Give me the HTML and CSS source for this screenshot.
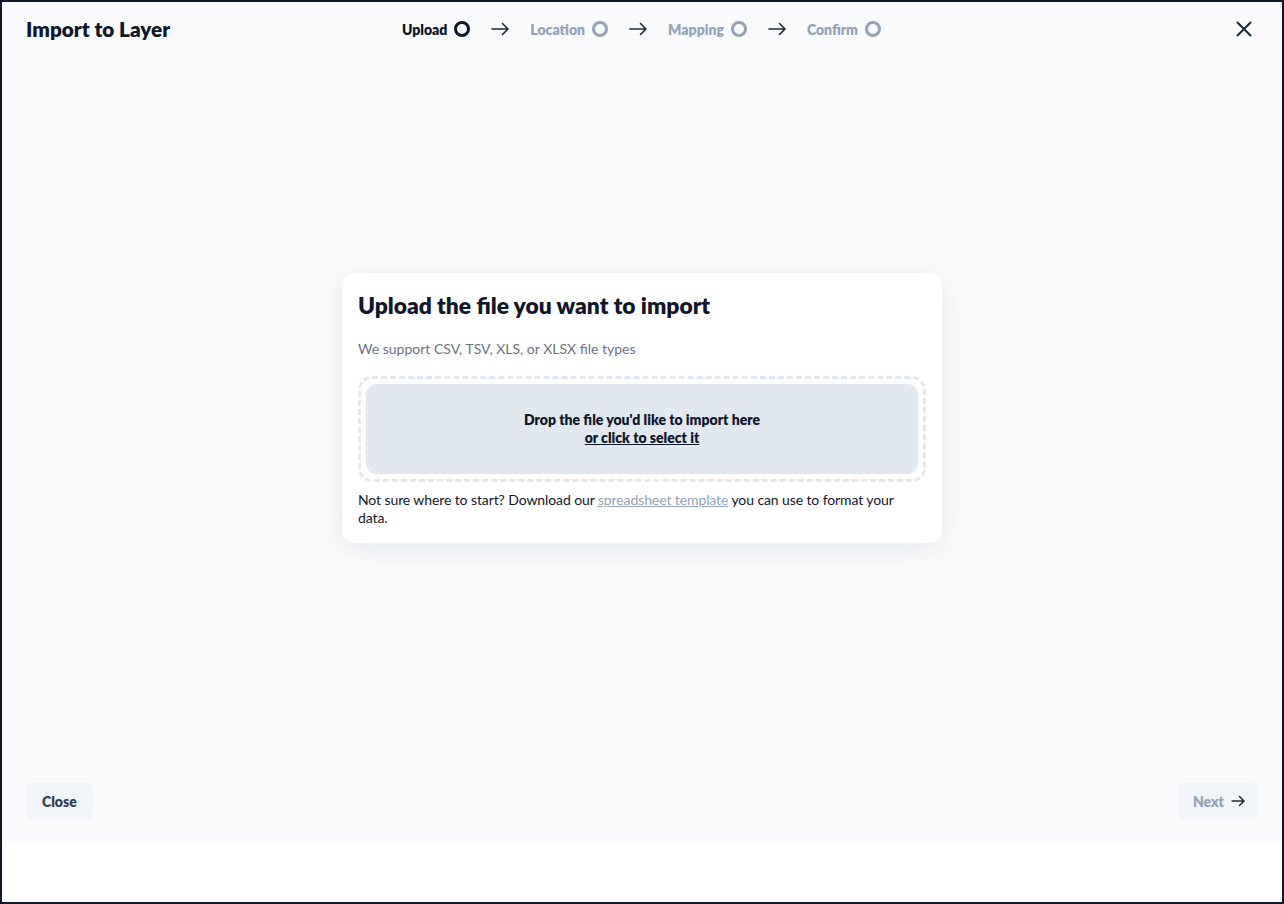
FILE: index.html
```html
<!DOCTYPE html>
<html lang="en">
<head>
    <meta charset="UTF-8">
    <meta name="viewport" content="width=device-width, initial-scale=1.0">
    <title>Import to Layer</title>
    <link rel="stylesheet" href="styles.css">
</head>
<body>
    <div class="frame">
        <div class="panel">
            <header class="topbar">
                <h1 class="title">Import to Layer</h1>

                <ol class="steps">
                    <li class="step active">Upload <span class="dot"></span></li>
                    <li class="arrow">
                        <svg width="20" height="20" viewBox="0 0 20 20" fill="none" stroke="currentColor" stroke-width="1.6" stroke-linecap="round" stroke-linejoin="round"><path d="M2 10h16M12.5 4.5L18 10l-5.5 5.5"/></svg>
                    </li>
                    <li class="step">Location <span class="dot"></span></li>
                    <li class="arrow">
                        <svg width="20" height="20" viewBox="0 0 20 20" fill="none" stroke="currentColor" stroke-width="1.6" stroke-linecap="round" stroke-linejoin="round"><path d="M2 10h16M12.5 4.5L18 10l-5.5 5.5"/></svg>
                    </li>
                    <li class="step">Mapping <span class="dot"></span></li>
                    <li class="arrow">
                        <svg width="20" height="20" viewBox="0 0 20 20" fill="none" stroke="currentColor" stroke-width="1.6" stroke-linecap="round" stroke-linejoin="round"><path d="M2 10h16M12.5 4.5L18 10l-5.5 5.5"/></svg>
                    </li>
                    <li class="step">Confirm <span class="dot"></span></li>
                </ol>

                <button class="close-x" type="button" aria-label="Close">
                    <svg width="16" height="16" viewBox="0 0 16 16" fill="none" stroke="currentColor" stroke-width="2" stroke-linecap="round"><path d="M1.5 1.5l13 13M14.5 1.5l-13 13"/></svg>
                </button>
            </header>

            <main class="content">
                <section class="card">
                    <h2>Upload the file you want to import</h2>
                    <p class="hint">We support CSV, TSV, XLS, or XLSX file types</p>

                    <div class="dropzone">
                        <div class="dropzone-inner">
                            <span>Drop the file you'd like to import here</span>
                            <a href="#" class="select-link">or click to select it</a>
                        </div>
                    </div>

                    <p class="template">Not sure where to start? Download our <a href="#">spreadsheet template</a> you can use to format your data.</p>
                </section>
            </main>

            <footer class="actions">
                <button class="btn" type="button">Close</button>
                <button class="btn next" type="button" disabled>
                    Next
                    <svg width="16" height="16" viewBox="0 0 16 16" fill="none" stroke="#1e293b" stroke-width="1.5" stroke-linecap="round" stroke-linejoin="round"><path d="M2 8h12M9.5 3.5L14 8l-4.5 4.5"/></svg>
                </button>
            </footer>
        </div>
    </div>
</body>
</html>
```

FILE: styles.css
```css
* {
    box-sizing: border-box;
}

body {
    margin: 0;
    font-family: 'Lato', 'Liberation Sans', sans-serif;
    color: #0f172a;
    background-color: #ffffff;
}

.frame {
    width: 1284px;
    height: 904px;
    border: 2px solid #111827;
    background-color: #ffffff;
}

.panel {
    height: 840px;
    background-color: #f8fafc;
    display: flex;
    flex-direction: column;
}

/* top bar: title, step indicator, close */
.topbar {
    height: 54px;
    padding: 0 30px 0 24px;
    display: flex;
    align-items: center;
    position: relative;
}

.title {
    margin: 0;
    font-size: 20.7px;
    font-weight: 800;
    color: #0f172a;
}

.steps {
    position: absolute;
    left: 400px;
    top: 0;
    height: 54px;
    margin: 0;
    padding: 0;
    list-style: none;
    display: flex;
    align-items: center;
    gap: 20px;
}

.step {
    display: flex;
    align-items: center;
    gap: 7px;
    font-size: 14px;
    font-weight: 800;
    color: #94a3b8;
}

.step .dot {
    width: 16px;
    height: 16px;
    border-radius: 50%;
    border: 3px solid #94a3b8;
}

.step.active {
    color: #0f172a;
}

.step.active .dot {
    border-color: #0f172a;
}

.arrow {
    display: flex;
    color: #1e293b;
}

.close-x {
    margin-left: auto;
    background: none;
    border: none;
    padding: 0;
    display: flex;
    color: #1e293b;
    cursor: pointer;
}

/* centered upload card */
.content {
    flex: 1;
    display: flex;
    align-items: center;
    justify-content: center;
    padding-top: 6px;
}

.card {
    width: 600px;
    background-color: #ffffff;
    border-radius: 12px;
    padding: 18px 16px 16px;
    box-shadow: 0 6px 28px rgba(15, 23, 42, 0.08);
}

.card h2 {
    margin: 0;
    font-size: 22.8px;
    line-height: 28px;
    font-weight: 800;
    color: #0f172a;
}

.hint {
    margin: 20px 0 17px;
    font-size: 14px;
    line-height: 20px;
    color: #6b7280;
}

.dropzone {
    border: 3px dashed #e2e8f0;
    border-radius: 14px;
    padding: 5px;
}

.dropzone-inner {
    height: 90px;
    background-color: #e2e8f0;
    border-radius: 10px;
    display: flex;
    flex-direction: column;
    align-items: center;
    justify-content: center;
    font-size: 14px;
    line-height: 18px;
    font-weight: 800;
    color: #0f172a;
    cursor: pointer;
}

.select-link {
    color: #0f172a;
    text-decoration: underline;
}

.template {
    margin: 9px 0 0;
    font-size: 14px;
    line-height: 18px;
    letter-spacing: -0.1px;
    color: #0f172a;
}

.template a {
    color: #94a3b8;
    text-decoration: underline;
}

/* bottom buttons */
.actions {
    height: 88px;
    padding: 6px 24px 0 24px;
    display: flex;
    justify-content: space-between;
    align-items: center;
}

.btn {
    height: 36px;
    padding: 0 16px;
    border: none;
    border-radius: 6px;
    background-color: #f1f5f9;
    font-family: inherit;
    font-size: 14px;
    font-weight: 800;
    color: #334155;
    display: flex;
    align-items: center;
    gap: 6px;
    cursor: pointer;
}

.btn.next {
    padding: 0 12px 0 15px;
    color: #94a3b8;
    cursor: default;
}
```
